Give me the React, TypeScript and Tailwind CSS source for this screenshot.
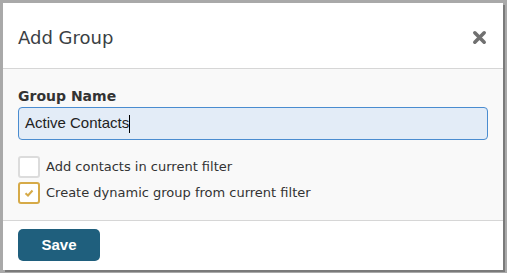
import React from "react";

export default function App() {
  return (
    <div className="w-[507px] h-[273px] bg-[#a9a9a9] pt-[3px] pl-[3px]" style={{ fontFamily: '"DejaVu Sans", sans-serif' }}>
      <div className="w-[500px] h-[267px] bg-white flex flex-col shadow-[2px_2px_0_#7a7a7a]">
        <div className="h-[66px] flex items-center justify-between pl-[15px] pr-[15px] pt-[3px] border-b border-[#d6d6d6]">
          <span className="text-[18px] text-[#3b3f45]">Add Group</span>
          <svg width="15" height="15" viewBox="0 0 16 16" className="mr-[1px]">
            <path d="M3 3 L13 13 M13 3 L3 13" stroke="#707070" strokeWidth="3.8" strokeLinecap="round" />
          </svg>
        </div>
        <div className="bg-[#f9f9f9] h-[152px] px-[15px] pt-[17px] border-b border-[#d6d6d6] flex flex-col">
          <label className="text-[14px] font-bold text-[#333] leading-[20px]">Group Name</label>
          <div className="mt-[1px] h-[33px] w-[470px] rounded-[4px] border border-[#4a8cd0] bg-[#e3ecf7] flex items-center pl-[6px]" style={{ fontFamily: '"Liberation Sans", Arial, sans-serif' }}>
            <span className="text-[15px] text-[#222]">Active Contacts</span>
            <span className="w-px h-[18px] bg-black"></span>
          </div>
          <div className="mt-[16px] flex flex-col gap-[4px]">
            <div className="flex items-center gap-[6px]">
              <span className="w-[22px] h-[22px] rounded-[3px] border-2 border-[#dcdcdc] bg-white"></span>
              <span className="text-[13px] text-[#333]">Add contacts in current filter</span>
            </div>
            <div className="flex items-center gap-[6px]">
              <span className="w-[22px] h-[22px] rounded-[3px] border-2 border-[#d6aa48] bg-white flex items-center justify-center">
                <svg width="10" height="8" viewBox="0 0 10 8">
                  <path d="M1.5 4.2 L4 6.5 L8.5 1.5" stroke="#d6aa48" strokeWidth="2" fill="none" />
                </svg>
              </span>
              <span className="text-[13px] text-[#333]">Create dynamic group from current filter</span>
            </div>
          </div>
        </div>
        <div className="flex-1 px-[15px] pt-[8px]">
          <button className="w-[82px] h-[32px] rounded-[5px] bg-[#1f5f7d] text-white text-[15px] font-bold" style={{ fontFamily: '"Liberation Sans", Arial, sans-serif' }}>Save</button>
        </div>
      </div>
    </div>
  );
}
